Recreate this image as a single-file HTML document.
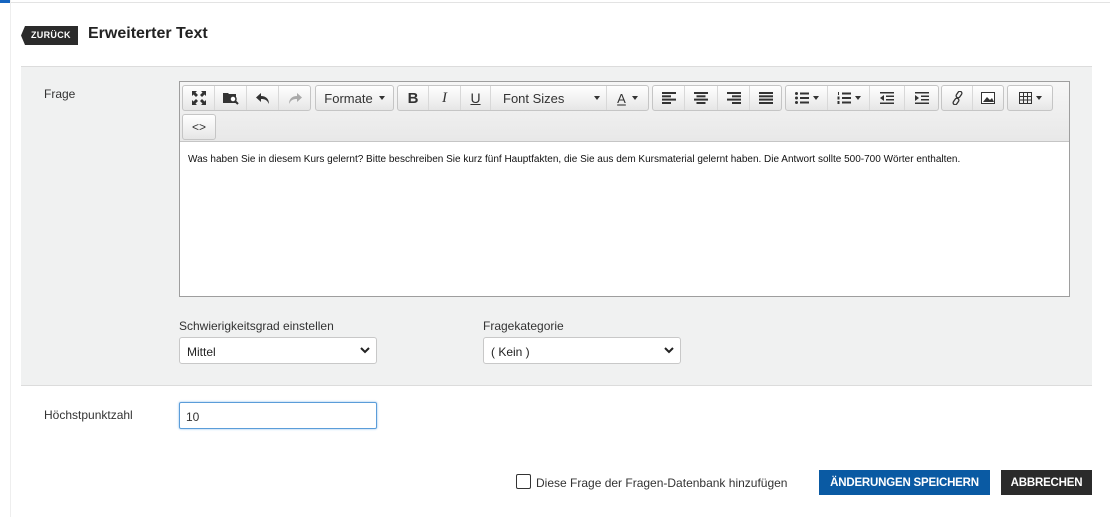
<!DOCTYPE html>
<html><head><style>
*{box-sizing:border-box;margin:0;padding:0}
body{width:1110px;height:517px;background:#fff;font-family:"Liberation Sans",sans-serif;position:relative;overflow:hidden;color:#333}
.a{position:absolute}
.grp{position:absolute;top:85px;height:26px;border:1px solid #c5c5c5;border-radius:3px;background:linear-gradient(#fff,#e6e6e6);display:flex;align-items:center}
.b{height:24px;display:flex;align-items:center;justify-content:center;font-size:13px;color:#333;border-right:1px solid #d8d8d8}
.b:last-child{border-right:none}
.caret{display:inline-block;border-left:3.5px solid transparent;border-right:3.5px solid transparent;border-top:4px solid #333;margin-left:6px}
.lbl{font-size:12px;color:#333}
.sel{position:absolute;height:27px;border:1px solid #c8c8c8;border-radius:3px;background:#fff;font-size:12px;padding:7px 0 0 7px;color:#222}
.sel svg{position:absolute;right:6px;top:9px}
</style></head><body>
<div class="a" style="left:0;top:0;width:10px;height:3px;background:#1565c0"></div>
<div class="a" style="left:10px;top:2px;width:1100px;height:1px;background:#e3e3e3"></div>
<div class="a" style="left:10px;top:0;width:1px;height:517px;background:#eee"></div>
<svg class="a" style="left:21px;top:26px" width="58" height="19"><polygon points="4,0 57,0 57,19 4,19 0,9.5" fill="#2b2b2b"/></svg>
<div class="a" style="left:31px;top:30px;font-size:9px;font-weight:bold;color:#fff;letter-spacing:.3px">ZURÜCK</div>
<div class="a" style="left:88px;top:25px;font-size:16px;color:#222;font-weight:bold;-webkit-text-stroke:0">Erweiterter Text</div>
<div class="a" style="left:21px;top:66px;width:1071px;height:320px;background:#f0f1f1;border-top:1px solid #dcdcdc;border-bottom:1px solid #dcdcdc"></div>
<div class="a lbl" style="left:44px;top:87px">Frage</div>
<div class="a" style="left:179px;top:81px;width:891px;height:216px;border:1px solid #9e9e9e;background:#fff"></div>
<div class="a" style="left:180px;top:82px;width:889px;height:60px;background:linear-gradient(#f6f6f6,#e8e8e8);border-bottom:1px solid #c5c5c5"></div>
<div class="grp" style="left:182px;width:129px">
<div class="b" style="width:32px"><svg width="14" height="14" viewBox="0 0 14 14" fill="#333"><path d="M0 0h5L3.5 1.5 6 4 4 6 1.5 3.5 0 5zM14 0v5l-1.5-1.5L10 6 8 4l2.5-2.5L9 0zM0 14V9l1.5 1.5L4 8l2 2-2.5 2.5L5 14zM14 14H9l1.5-1.5L8 10l2-2 2.5 2.5L14 9z"/></svg></div>
<div class="b" style="width:32px"><svg width="16" height="14" viewBox="0 0 16 14"><path d="M0 2h5l1 1h7v9H0z" fill="#333"/><circle cx="10" cy="8" r="3" fill="#fff" stroke="#333" stroke-width="1.5"/><path d="M12 10l3 3" stroke="#333" stroke-width="2"/></svg></div>
<div class="b" style="width:32px"><svg width="14" height="13" viewBox="0 0 14 13"><path d="M5 1L0 5.5 5 10V7c4 0 6 1 8 5 0-5-3-8-8-8z" fill="#333"/></svg></div>
<div class="b" style="width:31px"><svg width="14" height="13" viewBox="0 0 14 13"><path d="M9 1l5 4.5L9 10V7c-4 0-6 1-8 5 0-5 3-8 8-8z" fill="#aaa"/></svg></div>
</div>
<div class="grp" style="left:315px;width:79px"><div class="b" style="width:77px">Formate<span class="caret"></span></div></div>
<div class="grp" style="left:397px;width:252px">
<div class="b" style="width:31px;font-weight:bold;font-size:15px">B</div>
<div class="b" style="width:32px;font-style:italic;font-size:15px;font-family:'Liberation Serif',serif">I</div>
<div class="b" style="width:30px;text-decoration:underline;font-size:14px">U</div>
<div class="b" style="width:116px;justify-content:flex-start;padding-left:12px">Font Sizes<span class="caret" style="margin-left:30px"></span></div>
<div class="b" style="width:41px"><span style="text-decoration:underline;text-decoration-color:#888;text-decoration-thickness:2px">A</span><span class="caret"></span></div>
</div>
<div class="grp" style="left:652px;width:130px">
<div class="b" style="width:32px"><svg width="14" height="12" fill="#333"><rect x="0" y="0" width="14" height="2"/><rect x="0" y="3.3" width="9" height="2"/><rect x="0" y="6.6" width="14" height="2"/><rect x="0" y="10" width="9" height="2"/></svg></div>
<div class="b" style="width:33px"><svg width="14" height="12" fill="#333"><rect x="0" y="0" width="14" height="2"/><rect x="2.5" y="3.3" width="9" height="2"/><rect x="0" y="6.6" width="14" height="2"/><rect x="2.5" y="10" width="9" height="2"/></svg></div>
<div class="b" style="width:32px"><svg width="14" height="12" fill="#333"><rect x="0" y="0" width="14" height="2"/><rect x="5" y="3.3" width="9" height="2"/><rect x="0" y="6.6" width="14" height="2"/><rect x="5" y="10" width="9" height="2"/></svg></div>
<div class="b" style="width:31px"><svg width="14" height="12" fill="#333"><rect x="0" y="0" width="14" height="2"/><rect x="0" y="3.3" width="14" height="2"/><rect x="0" y="6.6" width="14" height="2"/><rect x="0" y="10" width="14" height="2"/></svg></div>
</div>
<div class="grp" style="left:785px;width:154px">
<div class="b" style="width:42px"><svg width="14" height="12" fill="#333"><circle cx="1.5" cy="1.5" r="1.5"/><circle cx="1.5" cy="6" r="1.5"/><circle cx="1.5" cy="10.5" r="1.5"/><rect x="5" y="0.5" width="9" height="2"/><rect x="5" y="5" width="9" height="2"/><rect x="5" y="9.5" width="9" height="2"/></svg><span class="caret" style="margin-left:4px"></span></div>
<div class="b" style="width:42px"><svg width="14" height="12" fill="#333"><rect x="1" y="0" width="1" height="3"/><rect x="0.5" y="4.5" width="2" height="3"/><rect x="0.5" y="9" width="2" height="3"/><rect x="5" y="0.5" width="9" height="2"/><rect x="5" y="5" width="9" height="2"/><rect x="5" y="9.5" width="9" height="2"/></svg><span class="caret" style="margin-left:4px"></span></div>
<div class="b" style="width:35px"><svg width="14" height="12" fill="#333"><rect x="0" y="0" width="14" height="1.5"/><rect x="6" y="3.5" width="8" height="1.5"/><rect x="6" y="7" width="8" height="1.5"/><rect x="0" y="10.5" width="14" height="1.5"/><path d="M0 6l4-3v6z"/></svg></div>
<div class="b" style="width:33px"><svg width="14" height="12" fill="#333"><rect x="0" y="0" width="14" height="1.5"/><rect x="6" y="3.5" width="8" height="1.5"/><rect x="6" y="7" width="8" height="1.5"/><rect x="0" y="10.5" width="14" height="1.5"/><path d="M4 6L0 3v6z"/></svg></div>
</div>
<div class="grp" style="left:941px;width:63px">
<div class="b" style="width:31px"><svg width="13" height="14" viewBox="0 0 13 14" fill="none" stroke="#333" stroke-width="1.3"><rect x="6" y="0" width="4" height="7" rx="2" transform="rotate(35 8 3.5)"/><rect x="3" y="7" width="4" height="7" rx="2" transform="rotate(35 5 10.5)"/></svg></div>
<div class="b" style="width:30px"><svg width="14" height="12"><rect x=".5" y=".5" width="13" height="11" fill="#fff" stroke="#333"/><path d="M2 10l4-5 3 3 2-2 2 4z" fill="#333"/></svg></div>
</div>
<div class="grp" style="left:1007px;width:46px"><div class="b" style="width:44px"><svg width="13" height="12"><rect x=".5" y=".5" width="12" height="11" fill="none" stroke="#333"/><path d="M4.5 0v12M8.5 0v12M0 4.5h13M0 8h13" stroke="#333"/></svg><span class="caret" style="margin-left:4px"></span></div></div>
<div class="grp" style="left:182px;top:114px;width:34px"><div class="b" style="width:32px;font-size:12px">&lt;&gt;</div></div>
<div class="a" style="left:188px;top:154px;font-size:10px;color:#111">Was haben Sie in diesem Kurs gelernt? Bitte beschreiben Sie kurz fünf Hauptfakten, die Sie aus dem Kursmaterial gelernt haben. Die Antwort sollte 500-700 Wörter enthalten.</div>
<div class="a lbl" style="left:179px;top:319px">Schwierigkeitsgrad einstellen</div>
<div class="sel" style="left:179px;top:337px;width:198px">Mittel<svg width="10" height="7"><path d="M1 1l4 4 4-4" stroke="#222" stroke-width="2" fill="none"/></svg></div>
<div class="a lbl" style="left:483px;top:319px">Fragekategorie</div>
<div class="sel" style="left:483px;top:337px;width:198px">( Kein )<svg width="10" height="7"><path d="M1 1l4 4 4-4" stroke="#222" stroke-width="2" fill="none"/></svg></div>
<div class="a lbl" style="left:44px;top:408px">Höchstpunktzahl</div>
<div class="a" style="left:179px;top:402px;width:198px;height:27px;border:1px solid #5b9dd9;border-radius:2px;box-shadow:0 0 2px #8bbcec;font-size:12px;padding:7px 0 0 6px">10</div>
<div class="a" style="left:516px;top:474px;width:15px;height:15px;border:1.5px solid #333;border-radius:2px"></div>
<div class="a" style="left:536px;top:476px;font-size:12px;color:#333">Diese Frage der Fragen-Datenbank hinzufügen</div>
<div class="a" style="left:819px;top:470px;width:171px;height:25px;background:#0a5aa3;color:#fff;font-size:11.5px;font-weight:bold;text-align:center;line-height:26px;letter-spacing:-.2px">ÄNDERUNGEN SPEICHERN</div>
<div class="a" style="left:1001px;top:470px;width:91px;height:25px;background:#2b2b2b;color:#fff;font-size:11.5px;font-weight:bold;text-align:center;line-height:26px;letter-spacing:-.2px">ABBRECHEN</div>
</body></html>
